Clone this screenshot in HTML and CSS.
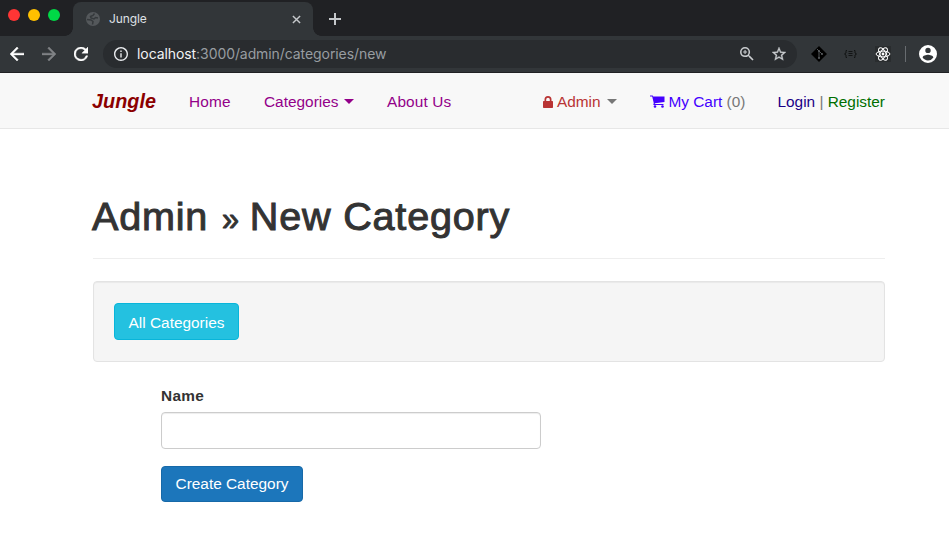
FILE: index.html
```html
<!DOCTYPE html>
<html lang="en">
<head>
<meta charset="utf-8">
<title>Jungle</title>
<link rel="stylesheet" href="styles.css">
</head>
<body>
<div class="tabstrip">
  <div class="lights"><i class="red"></i><i class="yellow"></i><i class="green"></i></div>
  <div class="tab">
    <svg class="globe" viewBox="0 0 14 14"><circle cx="7" cy="7" r="7"/><path class="land" d="M8.500 1.500L7 3.500 4.500 4.500 5 6l3 1 1.500-1.500L12 6M1 7.500l4 .500 2 1.500-.500 3"/></svg>
    <span>Jungle</span>
    <svg class="close" viewBox="0 0 10 10"><path d="M1 1l8 8M9 1L1 9"/></svg>
  </div>
  <svg class="plus" viewBox="0 0 12 12"><path d="M6 0v12M0 6h12"/></svg>
</div>
<div class="toolbar">
  <div class="controls">
    <svg class="back" viewBox="4 4 16 16"><path d="M20 11H7.830l5.590-5.590L12 4l-8 8 8 8 1.410-1.410L7.830 13H20v-2z"/></svg>
    <svg class="forward" viewBox="4 4 16 16"><path d="M12 4l-1.410 1.410L16.170 11H4v2h12.170l-5.580 5.590L12 20l8-8z"/></svg>
    <svg class="reload" viewBox="4 4 16 16"><path d="M17.650 6.350A8 8 0 1 0 19.730 14h-2.080A6 6 0 1 1 12 6c1.660 0 3.140.690 4.220 1.780L13 11h7V4z"/></svg>
  </div>
  <div class="address">
    <svg class="info" viewBox="2 2 20 20"><path d="M11 17h2v-6h-2v6zm1-15C6.480 2 2 6.480 2 12s4.480 10 10 10 10-4.480 10-10S17.520 2 12 2zm0 18c-4.410 0-8-3.590-8-8s3.590-8 8-8 8 3.590 8 8-3.590 8-8 8zM11 9h2V7h-2v2z"/></svg>
    <span class="url"><b>localhost</b>:3000/admin/categories/new</span>
    <svg class="zoom" viewBox="3 3 18 18"><path d="M15.500 14h-.790l-.280-.270A6.470 6.470 0 0 0 16 9.500 6.500 6.500 0 1 0 9.500 16c1.610 0 3.090-.590 4.230-1.570l.270.280v.790l5 4.990L20.490 19l-4.990-5zm-6 0a4.500 4.500 0 1 1 0-9 4.500 4.500 0 0 1 0 9zM10.200 7H8.800v1.800H7v1.400h1.800V12h1.400v-1.800H12V8.800h-1.800z"/></svg>
    <svg class="star" viewBox="2 2 20 20"><path d="M22 9.240l-7.190-.620L12 2 9.190 8.630 2 9.240l5.460 4.730L5.820 21 12 17.270 18.180 21l-1.630-7.030L22 9.240zM12 15.400l-3.760 2.270 1-4.280-3.320-2.880 4.380-.380L12 6.100l1.710 4.040 4.380.380-3.320 2.880 1 4.280L12 15.400z"/></svg>
  </div>
  <svg class="git" viewBox="0 0 16 16"><path d="M8 0l8 8-8 8-8-8z"/><path class="branch" d="M6 3l2 2v7M8 5l3 3"/><g class="dots"><circle cx="8" cy="5" r="1"/><circle cx="8" cy="12" r="1"/><circle cx="11" cy="8" r="1"/></g></svg>
  <svg class="braces" viewBox="0 0 13 8"><path d="M3 .500H2v2.500L.500 4 2 5v2.500h1M10 .500h1V3l1.500 1L11 5v2.500h-1M4.500 1.500h4M4.500 3.500h4M4.500 5.500h4"/></svg>
  <svg class="react" viewBox="0 0 16 16"><g><ellipse cx="8" cy="8" rx="6.900" ry="2.900"/><ellipse cx="8" cy="8" rx="6.900" ry="2.900" transform="rotate(60 8 8)"/><ellipse cx="8" cy="8" rx="6.900" ry="2.900" transform="rotate(120 8 8)"/></g><circle cx="8" cy="8" r="1.400"/></svg>
  <i class="divider"></i>
  <svg class="account" viewBox="2 2 20 20"><path d="M12 2a10 10 0 1 0 0 20 10 10 0 0 0 0-20zm0 3a3 3 0 1 1 0 6 3 3 0 0 1 0-6zm0 14.200c-2.500 0-4.710-1.280-6-3.220.030-1.990 4-3.080 6-3.080s5.970 1.090 6 3.080A7.200 7.200 0 0 1 12 19.200z"/></svg>
</div>
<nav class="navbar">
  <a class="brand">Jungle</a>
  <a class="item home">Home</a>
  <a class="item categories">Categories<i class="caret"></i></a>
  <a class="item about">About Us</a>
  <div class="right">
    <span class="item admin"><svg class="lock" viewBox="0 0 10 12"><path fill-rule="evenodd" d="M1.500 5V3.500a3.500 3.500 0 0 1 7 0V5H9.300q.7 0 .7.700v5.600q0 .7-.7.700H.700Q0 12 0 11.300V5.700Q0 5 .700 5zM3.200 5h3.600V3.500a1.800 1.800 0 0 0-3.600 0z"/></svg>Admin<i class="caret"></i></span>
    <span class="item cart"><svg class="trolley" viewBox="0 0 15 13"><path d="M0 .500h2.500q.5 0 .7 1H14.500V7L5 8.200l-.3.800H13.500v1H3.500l-.2-.7.500-1L2.200 1.600H0z"/><circle cx="5" cy="11.500" r="1.300"/><circle cx="12.500" cy="11.500" r="1.300"/></svg>My Cart <span class="count">(0)</span></span>
    <span class="item auth"><a class="login">Login</a> | <a class="register">Register</a></span>
  </div>
</nav>
<main class="container">
  <header class="page-header"><h1>Admin <span class="raquo">»</span> New Category</h1></header>
  <section class="well"><a class="btn info-btn">All Categories</a></section>
  <form class="form">
    <label for="name">Name</label>
    <input id="name" type="text">
    <button type="button" class="btn primary">Create Category</button>
  </form>
</main>
</body>
</html>
```
FILE: styles.css
```css
* { box-sizing: border-box; }
body {
  margin: 0;
  height: 539px;
  overflow: hidden;
  background: #fff;
  color: #333;
  font: 15.4px/22px "Liberation Sans", Arial, sans-serif;
}
svg { display: block; flex: none; fill: currentColor; }

/* Browser window */
.tabstrip { height: 36px; background: #202124; display: flex; }
.lights { width: 73px; padding: 9px 0 0 8px; display: flex; gap: 8px; }
.lights i { width: 12px; height: 12px; border-radius: 50%; }
.red { background: #ff3535; }
.yellow { background: #ffc000; }
.green { background: #00d946; }
.tab {
  position: relative;
  width: 240px;
  height: 34px;
  margin-top: 2px;
  padding: 0 12px 0 13px;
  display: flex;
  align-items: center;
  background: #323639;
  border-radius: 8px 8px 0 0;
  color: #dfe1e5;
  font: 12px/16px Inter, sans-serif;
  letter-spacing: -.1px;
}
.tab::before, .tab::after {
  content: "";
  position: absolute;
  bottom: 0;
  width: 8px;
  height: 8px;
}
.tab::before { left: -8px; background: radial-gradient(circle at 0 0, transparent 7.500px, #323639 8px); }
.tab::after { right: -8px; background: radial-gradient(circle at 100% 0, transparent 7.500px, #323639 8px); }
.globe { width: 14px; height: 14px; margin-right: 9px; color: #54585b; }
.land { fill: none; stroke: #35393c; stroke-width: 1.500; }
.close { width: 9px; height: 9px; margin-left: auto; stroke: #c5c8cb; stroke-width: 1.600; }
.plus { width: 12px; height: 12px; margin: 13px 0 0 16px; stroke: #c5c8cb; stroke-width: 2; }
.toolbar {
  height: 37px;
  padding: 0 12px 1px 10px;
  display: flex;
  align-items: center;
  background: #323639;
  border-bottom: 1px solid #202124;
  color: #fff;
}
.controls { width: 93px; display: flex; gap: 18px; }
.controls svg { width: 14px; height: 14px; stroke: currentColor; stroke-width: .5; }
.forward { color: #808386; }
.address {
  width: 694px;
  height: 28px;
  margin-right: 14px;
  padding: 0 11px;
  display: flex;
  align-items: center;
  background: #292c2f;
  border-radius: 14px;
  color: #c9cccf;
}
.info { width: 14px; height: 14px; color: #e8eaed; }
.url { margin-left: 9px; font: 14px/18px Inter, sans-serif; letter-spacing: -.08px; color: #989da1; }
.url b { font-weight: 400; color: #f1f3f4; }
.zoom { width: 14px; height: 14px; margin-left: auto; margin-right: 18px; }
.star { width: 14px; height: 14px; stroke: currentColor; stroke-width: .5; }
.git { width: 16px; height: 16px; color: #000; }
.branch { fill: none; stroke: #5c6063; stroke-width: .9; }
.dots { fill: #5c6063; }
.braces { width: 13px; height: 8px; margin-left: 17px; fill: none; stroke: #121415; stroke-width: 1; }
.react { width: 16px; height: 16px; margin-left: 18px; background: #292c2e; }
.react g { fill: none; stroke: #fff; stroke-width: 1; }
.divider { width: 1px; height: 16px; margin-left: 14px; background: #686c70; }
.account { width: 18px; height: 18px; margin-left: 13px; }

/* Site navigation */
.navbar {
  height: 56px;
  padding: 2px 64px 0 92px;
  display: flex;
  align-items: center;
  background: #f8f8f8;
  border-bottom: 1px solid #e7e7e7;
  color: #777;
  white-space: nowrap;
}
.brand { width: 80.500px; padding-bottom: 1px; color: #8b0000; font-size: 19.800px; font-weight: 700; font-style: italic; letter-spacing: .05px; }
.item { display: flex; align-items: center; padding: 0 16.500px; color: #930089; }
.home { width: 75px; letter-spacing: .2px; }
.categories { width: 123px; }
.about { letter-spacing: .12px; }
.caret { margin-left: 6px; border: 4.500px solid transparent; border-width: 5px 5px 0; border-top-color: currentColor; }
.right { margin-left: auto; display: flex; }
.right .item { color: #777; }
.right .item:last-child { padding-right: 0; }
.right .admin { color: #b93434; width: 107px; }
.right .admin .caret { color: #777; }
.lock { width: 10px; height: 12px; margin-right: 4px; }
.right .cart { color: #40f; width: 127.500px; white-space: pre; }
.trolley { width: 15px; height: 13px; margin-right: 3.500px; }
.count { color: #777; }
.auth { white-space: pre; }
.login { color: #1b0087; }
.register { color: #006f00; }

/* Page content */
.container { width: 792px; margin: 66px 0 0 93px; }
.page-header { height: 64px; border-bottom: 1px solid #eee; }
h1 { margin: 0 0 0 -1px; font-size: 39.600px; line-height: 43px; font-weight: 400; -webkit-text-stroke: 1px #333; letter-spacing: .8px; white-space: nowrap; }
.raquo { display: inline-block; width: 17px; margin: 0 -1px 0 2px; font-size: 34px; letter-spacing: 0; transform: scaleX(.9); transform-origin: left; }
.well {
  height: 81px;
  margin: 22px 0;
  padding: 21px 20px;
  background: #f5f5f5;
  border: 1px solid #e3e3e3;
  border-radius: 4px;
  box-shadow: inset 0 1px 1px rgba(0,0,0,.05);
}
.btn {
  display: flex;
  justify-content: center;
  align-items: center;
  border: 1px solid;
  border-radius: 4px;
  color: #fff;
  font: inherit;
  white-space: nowrap;
}
.info-btn { width: 125px; height: 37px; padding-top: 2px; background: #24c1e0; border-color: #08b5da; }
.form { margin-left: 68px; display: flex; flex-direction: column; align-items: flex-start; }
label { height: 28px; padding-top: 1px; font-weight: 700; letter-spacing: .3px; }
input {
  width: 380px;
  height: 37px;
  padding: 6px 13px;
  border: 1px solid #ccc;
  border-radius: 4px;
  font: inherit;
  box-shadow: inset 0 1px 1px rgba(0,0,0,.075);
}
.primary { width: 142px; height: 36px; margin-top: 17px; padding: 0; background: #1c76bb; border-color: #1769a8; }
```
